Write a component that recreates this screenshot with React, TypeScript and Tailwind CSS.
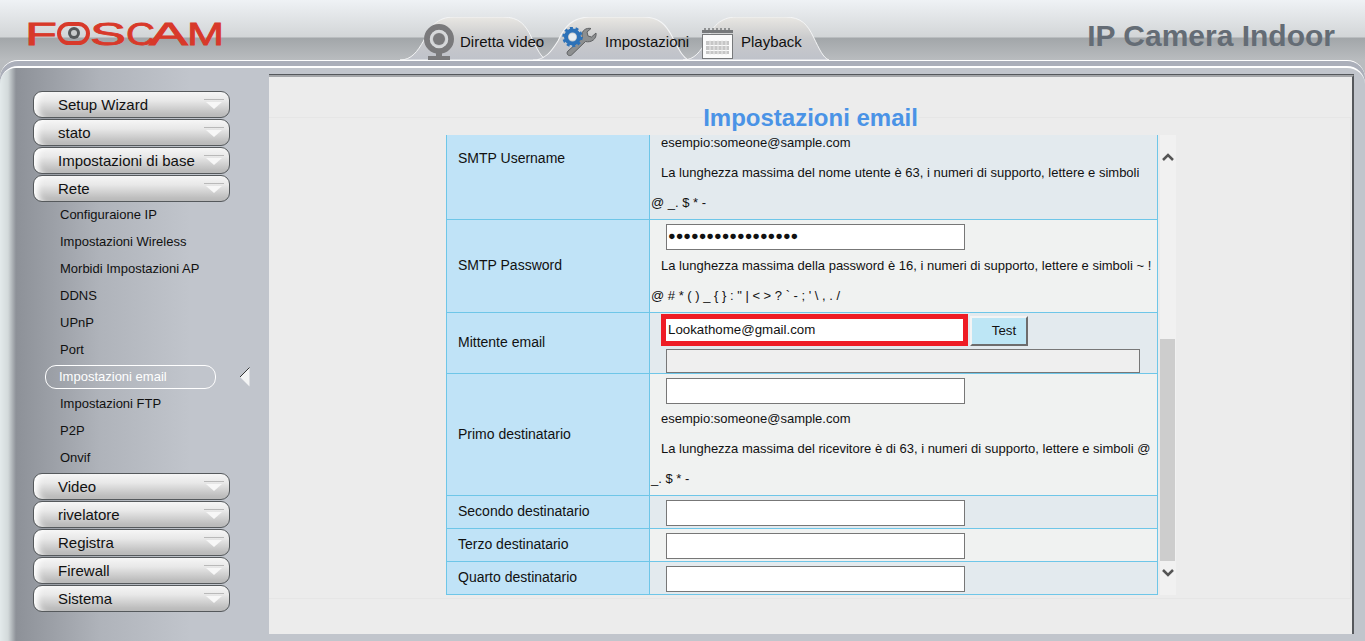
const sideTop = ['Setup Wizard', 'stato', 'Impostazioni di base', 'Rete']
const sideBottom = ['Video', 'rivelatore', 'Registra', 'Firewall', 'Sistema']
const subItems = [
  'Configuraione IP',
  'Impostazioni Wireless',
  'Morbidi Impostazioni AP',
  'DDNS',
  'UPnP',
  'Port',
  'Impostazioni email',
  'Impostazioni FTP',
  'P2P',
  'Onvif',
]

function Logo() {
  return (
    <svg width="200" height="40" viewBox="0 0 200 40" className="block overflow-visible">
      <g
        fill="#d8392a"
        stroke="#d8392a"
        strokeWidth="0.8"
        fontFamily="'Liberation Sans', sans-serif"
        fontSize="32"
      >
        <text x="-2" y="27" textLength="32" lengthAdjust="spacingAndGlyphs">F</text>
        <text x="63" y="27" textLength="36" lengthAdjust="spacingAndGlyphs">S</text>
        <text x="99" y="27" textLength="29" lengthAdjust="spacingAndGlyphs">C</text>
        <text x="122" y="27" textLength="39" lengthAdjust="spacingAndGlyphs">A</text>
        <text x="160" y="27" textLength="37" lengthAdjust="spacingAndGlyphs">M</text>
      </g>
      <rect x="32" y="6" width="29" height="19" rx="9.5" fill="none" stroke="#d8392a" strokeWidth="4" />
      <circle cx="47" cy="15" r="6" fill="#55585a" />
      <circle cx="47" cy="15" r="3" fill="#c9cbcc" />
    </svg>
  )
}

function WebcamIcon() {
  return (
    <svg width="30" height="36" viewBox="0 0 30 36" className="shrink-0">
      <circle cx="15" cy="15" r="12" fill="none" stroke="#7a7a7c" strokeWidth="6" />
      <circle cx="15" cy="15" r="8" fill="none" stroke="#d6d8da" strokeWidth="2.5" />
      <circle cx="15" cy="15" r="6" fill="#7a7a7c" />
      <rect x="12" y="29" width="6" height="3" fill="#7a7a7c" />
      <rect x="4" y="32" width="22" height="4" fill="#7a7a7c" />
    </svg>
  )
}

function ToolsIcon() {
  return (
    <svg width="35" height="30" viewBox="0 0 35 30" className="shrink-0">
      <path
        d="M34 6 L29.5 10 L26 9 L25 5 L29 1.5 C24 0.5 19.5 3.5 20 9 L20.5 11 L6 24 C3.5 26.5 6.5 30 9.5 28 L23.5 14.5 C29 16 35 12 34 6 Z"
        fill="#8d8f90"
        stroke="#5f6163"
        strokeWidth="1"
      />
      <circle cx="10.5" cy="10" r="6.5" fill="none" stroke="#2d72b8" strokeWidth="4" />
      <circle
        cx="10.5"
        cy="10"
        r="9"
        fill="none"
        stroke="#2d72b8"
        strokeWidth="2.5"
        strokeDasharray="3 2.65"
      />
      <circle cx="10.5" cy="10" r="3.6" fill="#e8eef2" />
    </svg>
  )
}

function CalendarIcon() {
  return (
    <svg width="31" height="32" viewBox="0 0 31 32" className="shrink-0">
      <rect x="0.5" y="7.5" width="30" height="24" fill="#fbfbfb" stroke="#77797b" />
      <rect x="0" y="3" width="31" height="3" fill="#77797b" />
      <path d="M3 4V1M7 4V1M11 4V1M15 4V1M19 4V1M23 4V1M27 4V1" stroke="#77797b" strokeWidth="1.5" />
      <g fill="#c6c6c6">
        <rect x="4" y="14" width="23" height="4" />
        <rect x="4" y="19" width="23" height="4" />
        <rect x="4" y="24" width="23" height="3" />
      </g>
      <path d="M8 13V28M12 13V28M16 13V28M20 13V28M24 13V28" stroke="#ececec" strokeWidth="1" />
    </svg>
  )
}

function Tab({ width, label, gap, icon, iconLeft, left, iconTop }: any) {
  return (
    <div className="relative h-[43px] shrink-0" style={{ width, marginLeft: left }}>
      <svg
        className="absolute inset-0"
        width={width}
        height="43"
        viewBox="0 0 150 43"
        preserveAspectRatio="none"
      >
        <defs>
          <linearGradient id="tabFill" x1="0" y1="0" x2="0" y2="1">
            <stop offset="0" stopColor="#e9e7e3" />
            <stop offset="0.5" stopColor="#c9cacc" />
            <stop offset="1" stopColor="#bfc2ca" />
          </linearGradient>
        </defs>
        <path
          d="M0 43 C12 43 18 34 24 24 C30 10 38 0 55 0 H105 C122 0 128 8 134 20 C140 32 144 41 150 43 Z"
          fill="url(#tabFill)"
          stroke="#f4f5f6"
          strokeWidth="1"
        />
      </svg>
      <div
        className="relative flex items-center text-[15px] text-[#111] h-full whitespace-nowrap"
        style={{ paddingLeft: iconLeft, gap }}
      >
        <span style={{ marginTop: iconTop }}>{icon}</span>
        <span className="mt-[8px]">{label}</span>
      </div>
    </div>
  )
}

function SideButton({ label }: { label: string }) {
  return (
    <div className="relative flex items-center h-[27px] w-[197px] pl-[24px] pt-[1px] rounded-[9px] border border-[#55595c] bg-[linear-gradient(180deg,#f6f6f6_0%,#e8e8e8_35%,#b4b4b4_100%)] text-[15px] text-[#111] shadow-[inset_8px_0_6px_-4px_#ffffff]">
      {label}
      <span className="absolute right-[5px] top-[7px] w-[20px] border-t border-[#b9b9b9]" />
      <svg className="absolute right-[7px] top-[10px]" width="16" height="7" viewBox="0 0 16 7">
        <path d="M0 0H16L8 7Z" fill="#f7f7f7" />
      </svg>
    </div>
  )
}

function SubItem({ label }: { label: string }) {
  if (label === 'Impostazioni email') {
    return (
      <div className="relative flex items-center h-[27px] ml-[12px]">
        <div className="flex items-center h-[24px] w-[171px] pl-[13px] rounded-[11px] border border-white text-white text-[13px]">
          {label}
        </div>
        <svg className="absolute left-[195px] top-[4px]" width="10" height="20" viewBox="0 0 10 20">
          <path d="M9.5 0.5V19.5L0 10Z" fill="#f3f4f4" />
          <path d="M9.5 0.5L0 10" stroke="#333" strokeWidth="1" />
        </svg>
      </div>
    )
  }
  return (
    <div className="flex items-center h-[27px] pl-[27px] pt-[1px] text-[13px] text-[#111]">{label}</div>
  )
}

function Row({ label, h, bg, top, children }: any) {
  return (
    <div className={`flex border-b border-[#6ec6e8] ${bg}`} style={{ height: h, marginTop: top }}>
      <div className="flex items-center w-[203px] shrink-0 pl-[11px] pb-[1px] text-[14px] bg-[#c0e3f7] border-r border-[#6ec6e8]">
        {label}
      </div>
      <div className="flex-1 min-w-0">{children}</div>
    </div>
  )
}

function Input({ value }: { value?: string }) {
  return (
    <div className="flex items-center w-[299px] h-[26px] ml-[16px] px-[1px] text-[12.7px] bg-white border border-[#777]">
      {value}
    </div>
  )
}

function Note({ text }: { text: string }) {
  return <p className="pl-[1px] indent-[10px] leading-[30px] text-[13px] w-[502px]">{text}</p>
}

function Example() {
  return <p className="pl-[11px] pt-[7px] leading-[15px] text-[13px]">esempio:someone@sample.com</p>
}

export default function App() {
  return (
    <div className="h-[641px] w-[1365px] overflow-hidden bg-[#b9bcbf] font-['Liberation_Sans',Arial,sans-serif] text-[#111]">
      <header className="flex h-[60px] bg-[linear-gradient(180deg,#eff2f5_0px,#d2d5d7_37px,#a2a6a9_38px,#b9bcbf_60px)]">
        <div className="pl-[27px] pt-[18px] w-[400px] shrink-0">
          <Logo />
        </div>
        <nav className="flex items-end">
          <Tab width={147} label="Diretta video" icon={<WebcamIcon />} iconLeft={24} gap={6} iconTop={6} />
          <Tab width={156} left={-14} label="Impostazioni" icon={<ToolsIcon />} iconLeft={29} gap={8} iconTop={7} />
          <Tab width={146} left={-6} label="Playback" icon={<CalendarIcon />} iconLeft={19} gap={8} iconTop={9} />
        </nav>
        <div className="ml-auto pr-[30px] pt-[18px] text-[30px] font-bold leading-[36px] text-[#646c75]">
          IP Camera Indoor
        </div>
      </header>

      <div className="h-[581px] rounded-t-[18px] border-t border-white bg-[#abafba] pt-[5px]">
        <div className="flex h-full rounded-t-[18px] border-t-2 border-white bg-[#c1c5cc]">
          <aside className="w-[269px] shrink-0 rounded-tl-[16px] pt-[23px] pl-[33px] bg-[linear-gradient(90deg,#e3eaeb_0px,#d3dadb_8px,#8d9198_16px,#afb3ba_100px,#c1c5cc_190px)]">
            <div className="flex flex-col gap-[1px]">
              {sideTop.map((s) => (
                <SideButton key={s} label={s} />
              ))}
            </div>
            <div className="mt-[-1px] mb-[2px]">
              {subItems.map((s) => (
                <SubItem key={s} label={s} />
              ))}
            </div>
            <div className="flex flex-col gap-[1px]">
              {sideBottom.map((s) => (
                <SideButton key={s} label={s} />
              ))}
            </div>
          </aside>

          <main className="mt-[7px] h-[559px] w-[1085px] shrink-0 border-t-2 border-r-2 border-t-[#a4a6a9] border-r-[#55585c] bg-[#ececec] pt-[40px] shadow-[0_-1px_0_#55585c]">
            <section className="h-[482px] w-[1082px] border-y border-r border-[#e6e6e6]">
              <h1 className="relative left-[1px] mx-auto -mt-[15px] mb-[2px] w-[216px] bg-[#ececec] text-center text-[24px] font-bold leading-[30px] text-[#4a93e6]">
                Impostazioni email
              </h1>
              <div className="flex ml-[177px] h-[460px] text-[13px]">
                <div className="w-[712px] h-[460px] overflow-hidden border-l border-r border-[#6ec6e8]">
                  <Row h={122} top={-37} bg="bg-[#e3eaee]" label="SMTP Username">
                    <div className="pt-[4px]">
                      <Input />
                    </div>
                    <Example />
                    <div className="pt-[8px]">
                      <Note text="La lunghezza massima del nome utente è 63, i numeri di supporto, lettere e simboli @ _. $ * -" />
                    </div>
                  </Row>
                  <Row h={93} bg="bg-[#f0f2f1]" label="SMTP Password">
                    <div className="pt-[4px] pb-[1px]">
                      <Input value="●●●●●●●●●●●●●●●●●" />
                    </div>
                    <Note text="La lunghezza massima della password è 16, i numeri di supporto, lettere e simboli ~ ! @ # * ( ) _ { } : &quot; | < > ? ` - ; ' \ , . /" />
                  </Row>
                  <Row h={61} bg="bg-[#e3eaee]" label="Mittente email">
                    <div className="flex items-start pt-[1px] pl-[11px]">
                      <div className="flex items-center w-[307px] h-[32px] pl-[2px] text-[13.3px] border-[5px] border-[#ee1c25] bg-white">
                        Lookathome@gmail.com
                      </div>
                      <button className="ml-[2px] mt-[2px] h-[30px] w-[58px] pl-[10px] text-[13.3px] border-2 border-t-[#f4f4f4] border-l-[#f4f4f4] border-r-[#6d6d6d] border-b-[#6d6d6d] bg-[#bde6f5]">
                        Test
                      </button>
                    </div>
                    <div className="mt-[3px] ml-[16px] h-[24px] w-[474px] border border-[#777] bg-[#efefef]" />
                  </Row>
                  <Row h={122} bg="bg-[#f0f2f1]" label="Primo destinatario">
                    <div className="pt-[4px]">
                      <Input />
                    </div>
                    <Example />
                    <div className="pt-[8px]">
                      <Note text="La lunghezza massima del ricevitore è di 63, i numeri di supporto, lettere e simboli @ _. $ * -" />
                    </div>
                  </Row>
                  <Row h={33} bg="bg-[#e3eaee]" label="Secondo destinatario">
                    <div className="pt-[4px]">
                      <Input />
                    </div>
                  </Row>
                  <Row h={33} bg="bg-[#f0f2f1]" label="Terzo destinatario">
                    <div className="pt-[4px]">
                      <Input />
                    </div>
                  </Row>
                  <Row h={33} bg="bg-[#e3eaee]" label="Quarto destinatario">
                    <div className="pt-[4px]">
                      <Input />
                    </div>
                  </Row>
                </div>
                <div className="relative ml-[2px] w-[16px] h-[460px] bg-[#f1f1f1]">
                  <svg className="absolute left-[2px] top-[17px]" width="12" height="10" viewBox="0 0 12 10">
                    <path d="M1 8L6 3L11 8" fill="none" stroke="#555" strokeWidth="2.5" />
                  </svg>
                  <div className="absolute top-[204px] left-0 h-[222px] w-[15px] bg-[#cdcdcd]" />
                  <svg className="absolute left-[2px] top-[433px]" width="12" height="10" viewBox="0 0 12 10">
                    <path d="M1 2L6 7L11 2" fill="none" stroke="#555" strokeWidth="2.5" />
                  </svg>
                </div>
              </div>
            </section>
          </main>
        </div>
      </div>
    </div>
  )
}
